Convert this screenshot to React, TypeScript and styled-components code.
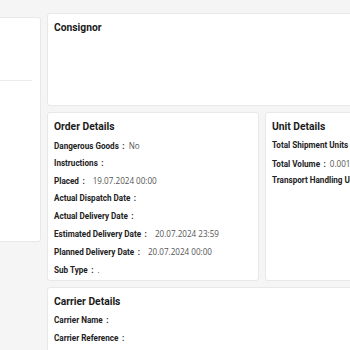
import React from "react";
import styled, { createGlobalStyle } from "styled-components";

const Global = createGlobalStyle`
  html, body { margin: 0; padding: 0; background: #f5f5f5; overflow: hidden; }
  body { font-family: Roboto, "Open Sans", sans-serif; color: #1f1f1f; }
`;

const Page = styled.div`
  display: grid;
  grid-template-columns: 41px 430px;
  column-gap: 6px;
  padding-top: 13px;
  width: 600px;
`;

const SideCard = styled.div`
  margin-top: 4px;
  height: 225px;
  background: #fff;
  border: 1px solid #e8e8e8;
  border-left: none;
  border-radius: 0 3px 3px 0;
  box-sizing: border-box;
  padding-top: 62px;
`;

const SideDivider = styled.div`
  height: 1px;
  width: 32px;
  background: #ececec;
`;

const Main = styled.div`
  display: flex;
  flex-direction: column;
  gap: 6px;
`;

const Card = styled.div<{ $h?: number }>`
  background: #fff;
  border: 1px solid #e8e8e8;
  border-radius: 3px;
  box-sizing: border-box;
  padding: 6px 6px;
  height: ${(p) => (p.$h ? `${p.$h}px` : "auto")};
`;

const Row = styled.div`
  display: grid;
  grid-template-columns: 212px 212px;
  column-gap: 6px;
`;

const Title = styled.div`
  font-family: Roboto, sans-serif;
  font-size: 10.3px;
  font-weight: 700;
  line-height: 16px;
  margin-bottom: 2px;
  color: #1a1a1a;
`;

const Field = styled.div`
  display: flex;
  align-items: baseline;
  height: 17.7px;
  line-height: 17.7px;
  white-space: nowrap;
`;

const Label = styled.span`
  font-family: Roboto, sans-serif;
  font-size: 8.15px;
  font-weight: 700;
  color: #222;
`;

const Colon = styled.span`
  font-family: Roboto, sans-serif;
  font-size: 8.15px;
  font-weight: 700;
  margin: 0 4px 0 3.5px;
`;

const Value = styled.span<{ $gap?: number }>`
  font-family: "Open Sans", sans-serif;
  color: #555;
  font-size: 8.1px;
  margin-left: ${(p) => (p.$gap ? `${p.$gap}px` : "0")};
`;

type F = [string, string?, number?];

const FieldList = ({ items }: { items: F[] }) => (
  <>
    {items.map(([l, v, g]) => (
      <Field key={l}>
        <Label>{l}</Label>
        <Colon>:</Colon>
        {v !== undefined && <Value $gap={g}>{v}</Value>}
      </Field>
    ))}
  </>
);

export default function App() {
  return (
    <>
      <Global />
      <Page>
        <SideCard>
          <SideDivider />
        </SideCard>
        <Main>
          <Card $h={93}>
            <Title>Consignor</Title>
          </Card>
          <Row>
            <Card $h={169}>
              <Title>Order Details</Title>
              <FieldList
                items={[
                  ["Dangerous Goods", "No"],
                  ["Instructions"],
                  ["Placed", "19.07.2024 00:00", 4],
                  ["Actual Dispatch Date"],
                  ["Actual Delivery Date"],
                  ["Estimated Delivery Date", "20.07.2024 23:59", 4],
                  ["Planned Delivery Date", "20.07.2024 00:00", 4],
                  ["Sub Type", "."],
                ]}
              />
            </Card>
            <Card $h={169}>
              <Title>Unit Details</Title>
              <FieldList
                items={[
                  ["Total Shipment Units"],
                  ["Total Volume", "0.0017"],
                  ["Transport Handling Units"],
                ]}
              />
            </Card>
          </Row>
          <Card $h={120}>
            <Title>Carrier Details</Title>
            <FieldList items={[["Carrier Name"], ["Carrier Reference"]]} />
          </Card>
        </Main>
      </Page>
    </>
  );
}
